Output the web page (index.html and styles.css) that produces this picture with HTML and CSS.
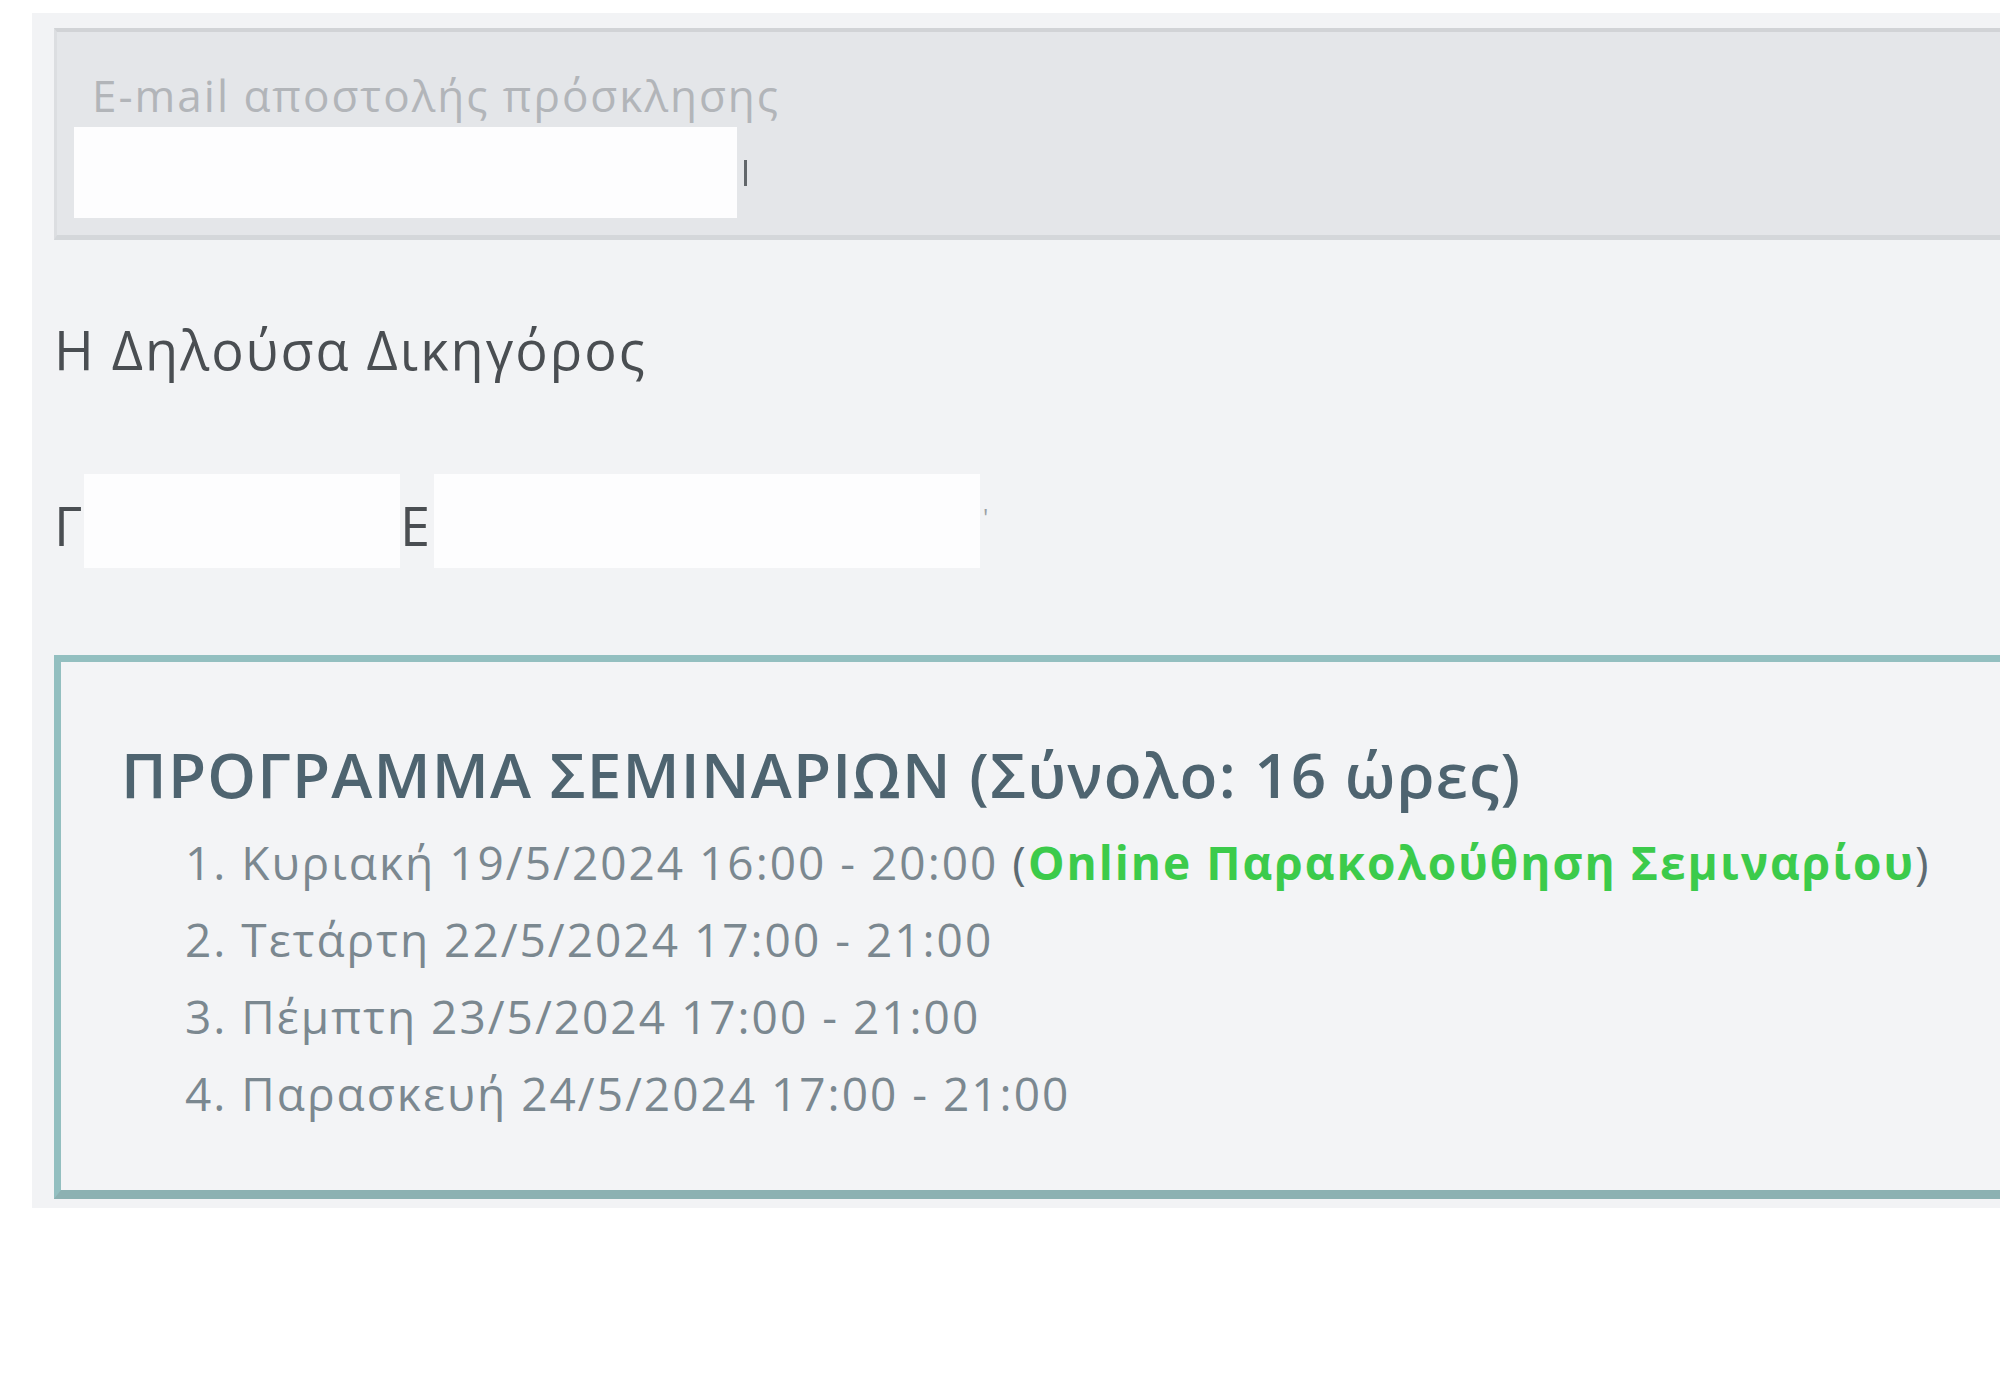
FILE: index.html
```html
<!DOCTYPE html>
<html lang="el">
<head>
<meta charset="utf-8">
<title>Δήλωση συμμετοχής</title>
<link rel="stylesheet" href="styles.css">
</head>
<body>
<div class="panel">
  <div class="email-field">
    <div class="email-label">E-mail αποστολής πρόσκλησης</div>
    <div class="email-row">
      <div class="email-input"></div>
      <span class="caret"></span>
    </div>
  </div>

  <div class="declarant">Η Δηλούσα Δικηγόρος</div>

  <div class="name-row">
    <span class="initial">Γ</span>
    <span class="blank blank-first"></span>
    <span class="initial">Ε</span>
    <span class="blank blank-last"></span>
    <span class="tick">'</span>
  </div>

  <div class="program">
    <h2 class="program-title">ΠΡΟΓΡΑΜΜΑ ΣΕΜΙΝΑΡΙΩΝ (Σύνολο: 16 ώρες)</h2>
    <ol class="program-list">
      <li>Κυριακή 19/5/2024 16:00 - 20:00 <span class="online">(<b>Online Παρακολούθηση Σεμιναρίου</b>)</span></li>
      <li>Τετάρτη 22/5/2024 17:00 - 21:00</li>
      <li>Πέμπτη 23/5/2024 17:00 - 21:00</li>
      <li>Παρασκευή 24/5/2024 17:00 - 21:00</li>
    </ol>
  </div>
</div>
</body>
</html>
```

FILE: styles.css
```css
html, body {
  margin: 0;
  padding: 0;
  background: #ffffff;
  overflow: hidden;
}

body {
  width: 2000px;
  height: 1400px;
  font-family: "Open Sans", "Noto Sans", sans-serif;
}

.panel {
  margin-top: 13px;
  margin-left: 32px;
  background: #f2f3f5;
  padding: 15px 0 9px 22px;
  display: flex;
  flex-direction: column;
}

.email-field {
  background: #e4e6e9;
  border-top: 4px solid #d1d3d6;
  border-bottom: 5px solid #d4d7da;
  border-left: 3px solid #dcdee1;
  height: 212px;
  box-sizing: border-box;
  padding: 0 0 0 17px;
  display: flex;
  flex-direction: column;
}

.email-label {
  font-size: 44px;
  line-height: 52px;
  margin-top: 37px;
  margin-left: 18px;
  color: #b2b5b9;
  letter-spacing: 2px;
}

.email-row {
  display: flex;
  align-items: center;
  margin-top: 6px;
}

.email-input {
  width: 663px;
  height: 91px;
  background: #fdfdfe;
}

.caret {
  width: 3px;
  height: 26px;
  background: #62676b;
  margin-left: 7px;
}

.declarant {
  margin-top: 79px;
  font-size: 54px;
  line-height: 60px;
  color: #4a4e52;
  letter-spacing: 2px;
}

.name-row {
  margin-top: 95px;
  display: flex;
  align-items: center;
  height: 94px;
  font-size: 54px;
  color: #4a4e52;
}

.initial {
  line-height: 60px;
  margin-top: 8px;
}

.blank {
  height: 94px;
  background: #fdfdfe;
}

.blank-first {
  width: 316px;
  margin-left: 2px;
}

.blank-last {
  width: 546px;
  margin-left: 4px;
}

.tick {
  font-size: 24px;
  color: #9aa0a4;
  align-self: flex-start;
  margin-top: 26px;
  margin-left: 3px;
}

.program {
  margin-top: 87px;
  border: 7px solid #93bfc0;
  border-bottom-width: 9px;
  border-bottom-color: #8cb1b2;
  border-right: none;
  background: #f3f4f6;
  height: 544px;
  box-sizing: border-box;
  padding: 74px 0 0 60px;
}

.program-title {
  margin: 0;
  font-size: 62px;
  line-height: 76px;
  font-weight: 600;
  color: #4e6470;
  letter-spacing: 1.2px;
}

.program-list {
  margin: 12px 0 0;
  padding: 0 0 0 64px;
  list-style: none;
  counter-reset: item;
  font-size: 46px;
  line-height: 77px;
  color: #7b8890;
  letter-spacing: 2px;
}

.program-list li {
  counter-increment: item;
}

.program-list li::before {
  content: counter(item) ". ";
}

.online {
  color: #5d6b72;
}

.online b {
  color: #3ccb4b;
  font-weight: 700;
}
```
